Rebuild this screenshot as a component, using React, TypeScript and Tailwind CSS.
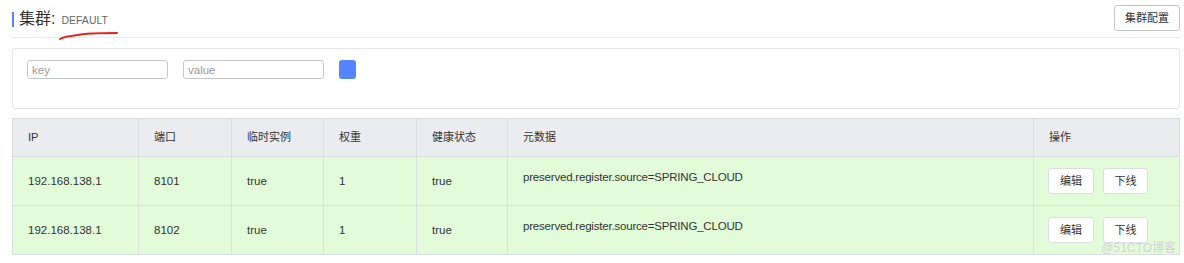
import React from 'react';

const rows = [
  { ip: '192.168.138.1', port: '8101', ephemeral: 'true', weight: '1', healthy: 'true', meta: 'preserved.register.source=SPRING_CLOUD' },
  { ip: '192.168.138.1', port: '8102', ephemeral: 'true', weight: '1', healthy: 'true', meta: 'preserved.register.source=SPRING_CLOUD' },
];

const cols = ['IP', '端口', '临时实例', '权重', '健康状态', '元数据', '操作'];
const widths = ['w-[126px]', 'w-[93px]', 'w-[92px]', 'w-[93px]', 'w-[91px]', 'w-[526px]', 'w-[146px]'];

const App = () => {
  return (
    <div className="relative w-[1184px] h-[263px] bg-white pl-3 pr-[4px] text-[11.5px] text-[#333] font-['Microsoft_YaHei','Liberation_Sans','Noto_Sans_CJK_SC',sans-serif]">
      {/* title bar */}
      <div className="relative flex items-center justify-between h-[38px] border-b border-[#ebebeb] pt-[1px]">
        <div className="flex items-center">
          <span className="w-[2px] h-[15px] bg-[#5584ff] mr-[5px]" />
          <span className="text-[16px] text-[#333] leading-none">集群:</span>
          <span className="ml-[6px] text-[10.5px] text-[#666] leading-none mt-[2px]">DEFAULT</span>
        </div>
        <button className="h-[26px] w-[66px] border border-[#c4c6cf] rounded-[3px] bg-white text-[11px] text-[#333] mb-[2px]">
          集群配置
        </button>
        <svg className="absolute left-[46px] top-[31px]" width="62" height="10" viewBox="0 0 62 10">
          <path d="M2 8 C 6 5, 14 5, 20 4 C 28 2, 40 2, 59 2" stroke="#e8201c" strokeWidth="2" fill="none" strokeLinecap="round" />
        </svg>
      </div>

      {/* filter */}
      <div className="mt-[10px] w-[1168px] h-[61px] border border-[#e6e6e6] rounded-[3px] px-[14px] pt-[11px]">
        <div className="flex items-center gap-[15px]">
          <input placeholder="key" className="w-[141px] h-[19px] border border-[#c4c6cf] rounded-[3px] px-[4px] text-[11.5px] placeholder:text-[#999] outline-none" />
          <input placeholder="value" className="w-[141px] h-[19px] border border-[#c4c6cf] rounded-[3px] px-[4px] text-[11.5px] placeholder:text-[#999] outline-none" />
          <button className="w-[17px] h-[19px] rounded-[3px] bg-[#5584ff]" />
        </div>
      </div>

      {/* table */}
      <table className="mt-[9px] w-[1167px] border-collapse table-fixed">
        <thead>
          <tr className="bg-[#ebecf0] h-[38px]">
            {cols.map((c, i) => (
              <th key={c} className={`${widths[i]} border border-[#dcdee3] px-[15px] text-left font-normal text-[11px] text-[#333]`}>
                {c}
              </th>
            ))}
          </tr>
        </thead>
        <tbody>
          {rows.map((r) => (
            <tr key={r.port} className="bg-[#e2fcda] h-[49px]">
              <td className="border border-[#dcdee3] px-[15px] pt-[2px]">{r.ip}</td>
              <td className="border border-[#dcdee3] px-[15px] pt-[2px]">{r.port}</td>
              <td className="border border-[#dcdee3] px-[15px] pt-[2px]">{r.ephemeral}</td>
              <td className="border border-[#dcdee3] px-[15px] pt-[2px]">{r.weight}</td>
              <td className="border border-[#dcdee3] px-[15px] pt-[2px]">{r.healthy}</td>
              <td className="border border-[#dcdee3] px-[15px] pb-[6px] tracking-[-0.2px]">{r.meta}</td>
              <td className="border border-[#dcdee3] px-[14px]">
                <div className="flex gap-[9px]">
                  <button className="h-[26px] w-[46px] border border-[#dcdee3] rounded-[3px] bg-white text-[11px] text-[#333]">编辑</button>
                  <button className="h-[26px] w-[45px] border border-[#dcdee3] rounded-[3px] bg-white text-[11px] text-[#333]">下线</button>
                </div>
              </td>
            </tr>
          ))}
        </tbody>
      </table>

      <span className="absolute right-[8px] top-[242px] text-[12px] text-[#d4d4d4] leading-none">@51CTO博客</span>
    </div>
  );
};

export default App;
